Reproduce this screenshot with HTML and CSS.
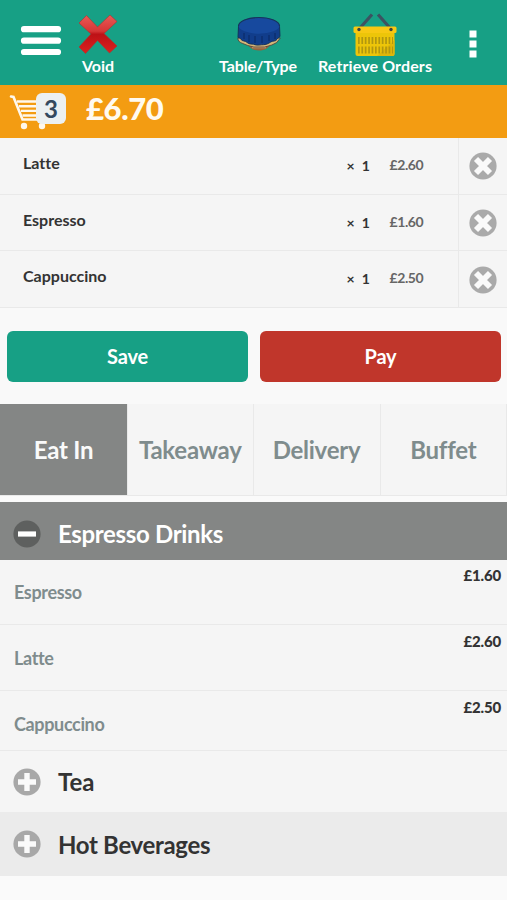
FILE: index.html
```html
<!DOCTYPE html>
<html lang="en">
<head>
<meta charset="utf-8">
<title>Point of Sale</title>
<link rel="stylesheet" href="styles.css">
</head>
<body>
<svg width="0" height="0" class="defs" aria-hidden="true">
  <symbol id="remove" viewBox="0 0 28 28"><circle cx="14" cy="14" r="13.6" fill="#aaa"/><path d="M7 7 21 21M21 7 7 21" stroke="#fafafa" stroke-width="5.8"/></symbol>
  <symbol id="plus" viewBox="0 0 28 28"><circle cx="14" cy="14" r="13.6" fill="#a8a8a8"/><path d="M14 5v18M5 14h18" stroke="#fafafa" stroke-width="5.4"/></symbol>
  <symbol id="minus" viewBox="0 0 28 28"><circle cx="14" cy="14" r="13.6" fill="#5e605f"/><path d="M5 14h18" stroke="#fff" stroke-width="5.2"/></symbol>
</svg>
<header class="topbar">
  <svg class="menu" width="42" height="32" viewBox="0 0 42 32"><path d="M4 4.2h34M4 15.7h34M4 27h34" stroke="#fff" stroke-width="6.2" stroke-linecap="round"/></svg>
  <div class="action void">
    <svg width="42" height="42" viewBox="0 0 42 42">
      <defs><linearGradient id="red" x2="0" y2="1"><stop offset="0" stop-color="#e95a56"/><stop offset=".42" stop-color="#d63636"/><stop offset=".5" stop-color="#bd1116"/><stop offset="1" stop-color="#dc211e"/></linearGradient></defs>
      <path d="M9.500 2.500 20.500 14 33 2 40 8.500 27 20.500 40 33l-7.500 7L20.500 27.500 8.500 40.500 2 34 14 21 2 10z" fill="url(#red)" stroke="#b02f2c" stroke-width=".6"/>
    </svg>
    <span>Void</span>
  </div>
  <div class="action table">
    <svg width="46" height="38" viewBox="0 0 46 38">
      <path d="M12 29c1 4 5 6.500 11 6.500S33 33 34 29z" fill="#94643f"/>
      <path d="M16 32.500h14" stroke="#c79a6b" stroke-width="1.500"/>
      <path d="M1.800 23c0 3 2 4.500 5 5.500l5 2 6 1.500h11l7-2 5-2.500 3.500-4.500z" fill="#d6b777" stroke="#4b3e3a" stroke-width=".8"/>
      <path d="M2.500 11 2 22.500c3 0 3 3.500 6 3.500s3 3 7 3 4 1.500 8 1 5 0 8-1 4-3 7-3 3-3 6-4.500L43.500 11z" fill="#113d8b" stroke="#14335c"/>
      <path d="M8 18v6m5-4v7m6-6v7m7-7v7m7-8v6m6-8v6" stroke="#0c2c6a" stroke-width="1.200"/>
      <ellipse cx="23" cy="10.500" rx="20.500" ry="8.300" fill="#17499e"/>
      <path d="M2.500 11a20.500 8.500 0 0 1 41 0" fill="none" stroke="#17345a" stroke-width="1.200"/>
    </svg>
    <span>Table/Type</span>
  </div>
  <div class="action retrieve">
    <svg width="44" height="44" viewBox="0 0 44 44">
      <path d="m7 15 12-13.500M37 15 25 1.500" stroke="#3c5361" stroke-width="3.200"/>
      <path d="M2.500 18h39V41q0 2-2 2h-35q-2 0-2-2z" fill="#edc509"/>
      <path d="M24 43 41.500 27V41q0 2-2 2z" fill="#dfb608"/>
      <rect x=".5" y="13.500" width="43" height="6.500" rx="1.500" fill="#f8c813"/>
      <circle cx="6" cy="16.500" r="1.700" fill="#3d4440"/><circle cx="38" cy="16.500" r="1.700" fill="#3d4440"/>
      <path d="M5 27.500h35M5 37h35" stroke="#b2970f" stroke-width="7" stroke-dasharray="1.700 1.700"/>
    </svg>
    <span>Retrieve Orders</span>
  </div>
  <svg class="more" width="8" height="28" viewBox="0 0 8 28" fill="#fff"><path d="M.5.5h7v7h-7zM.5 10.500h7v7h-7zM.5 20.500h7v7h-7z"/></svg>
</header>
<section class="total">
  <div class="cart">
    <svg width="40" height="36" viewBox="0 0 40 36" fill="none" stroke="#fff8ec">
      <path d="M2 2.500 4.500 3 13.500 25.500H38" stroke-width="2.600" stroke-linecap="round"/>
      <path d="M8 7.500h30M10 12.200h28M12 16.900h26M13.500 21.500H38" stroke-width="2.400"/>
      <circle cx="15" cy="32" r="3.200" fill="#fff8ec" stroke="none"/><circle cx="33" cy="32" r="3.200" fill="#fff8ec" stroke="none"/>
    </svg>
    <span class="badge">3</span>
  </div>
  <strong>£6.70</strong>
</section>
<ul class="order">
  <li><span class="name">Latte</span><span class="qty"><i>×</i>1</span><span class="cost">£2.60</span><button class="del" aria-label="Remove"><svg width="28" height="28"><use href="#remove"/></svg></button></li>
  <li><span class="name">Espresso</span><span class="qty"><i>×</i>1</span><span class="cost">£1.60</span><button class="del" aria-label="Remove"><svg width="28" height="28"><use href="#remove"/></svg></button></li>
  <li><span class="name">Cappuccino</span><span class="qty"><i>×</i>1</span><span class="cost">£2.50</span><button class="del" aria-label="Remove"><svg width="28" height="28"><use href="#remove"/></svg></button></li>
</ul>
<div class="buttons"><button class="save">Save</button><button class="pay">Pay</button></div>
<nav class="tabs"><a class="active">Eat In</a><a>Takeaway</a><a>Delivery</a><a>Buffet</a></nav>
<main>
  <h2 class="open"><svg width="28" height="28"><use href="#minus"/></svg>Espresso Drinks</h2>
  <ul class="items">
    <li><span>Espresso</span><b>£1.60</b></li>
    <li><span>Latte</span><b>£2.60</b></li>
    <li><span>Cappuccino</span><b>£2.50</b></li>
  </ul>
  <h2 class="tea"><svg width="28" height="28"><use href="#plus"/></svg>Tea</h2>
  <h2 class="hot"><svg width="28" height="28"><use href="#plus"/></svg>Hot Beverages</h2>
</main>
</body>
</html>
```
FILE: styles.css
```css
* { box-sizing: border-box; }
body { margin: 0; height: 900px; overflow: hidden; background: #fafafa; font-family: Lato, sans-serif; font-weight: 700; font-variant-ligatures: none; color: #333; }
.defs { display: block; height: 0; }
svg { display: block; flex: none; }
button { border: 0; padding: 0; font: inherit; }
ul { margin: 0; padding: 0; list-style: none; }

.topbar { height: 85px; background: #17a085; display: flex; color: #fff; }
.menu { margin: 25px 0 0 20px; }
.action { display: flex; flex-direction: column; align-items: center; justify-content: flex-end; height: 76px; font-size: 16px; line-height: 20px; white-space: nowrap; }
.void { width: 42px; margin-left: 15px; }
.void svg { margin-bottom: 1px; }
.table { width: 80px; margin-left: 99px; letter-spacing: -0.15px; }
.table svg { margin: 0 0 3px 2px; }
.retrieve { width: 116px; margin-left: 19px; letter-spacing: 0.12px; }
.retrieve svg { margin-right: 1px; margin-bottom: -1px; }
.more { margin: 30px 0 0 36px; }

.total { height: 53px; background: #f39c12; display: flex; color: #fffaf0; }
.cart { position: relative; width: 58px; margin-left: 9px; padding-top: 9px; }
.badge { position: absolute; left: 27px; top: 8px; width: 30px; height: 31px; border-radius: 6px; background: #ecf0f1; color: #34495e; font-size: 24px; line-height: 32px; text-align: center; }
.total strong { margin-left: 19px; font-size: 31px; line-height: 46px; letter-spacing: -0.4px; }

.order { background: #f5f5f5; }
.order li { height: 56.67px; display: flex; border-bottom: 1px solid #e9e9e9; }
.name { width: 324px; padding: 15px 0 0 23px; font-size: 16px; line-height: 20px; }
.qty { width: 65.5px; display: flex; gap: 7px; padding: 18px 0 0 22.5px; font-size: 14px; line-height: 20px; }
.qty i { font-style: normal; }
.cost { width: 68.500px; padding-top: 17px; font-size: 14px; line-height: 20px; letter-spacing: -0.4px; color: #666; }
.del { flex: 1; display: flex; align-items: center; justify-content: center; padding-top: 1px; border-left: 1px solid #e9e9e9; background: none; }

.buttons { display: grid; grid-template-columns: 1fr 1fr; gap: 12px; height: 96px; padding: 23px 6px 22px 7px; background: #f9f9f9; }
.buttons button { border-radius: 6px; color: #fff; font-size: 20px; letter-spacing: -0.2px; }
.save { background: #17a085; }
.pay { background: #c0362b; }

.tabs { display: grid; grid-template-columns: 128px 125.5px 127px 1fr; height: 92px; background: #f5f5f5; border-bottom: 1px solid #e9e9e9; color: #7f8c8d; }
.tabs a { display: flex; align-items: center; justify-content: center; border-right: 1px solid #e9e9e9; font-size: 24px; letter-spacing: -0.25px; }
.tabs .active { background: #848685; color: #fafafa; }

main { margin-top: 6px; }
h2 { margin: 0; display: flex; align-items: center; gap: 17px; padding-left: 13px; font-size: 24px; letter-spacing: -0.33px; }
.open { height: 58px; padding-top: 6px; background: #848685; color: #fff; }
.items { background: #f5f5f5; }
.items li { height: 66px; display: flex; justify-content: space-between; padding: 0 6px 0 14px; border-bottom: 1px solid #e9e9e9; }
.items li:first-child { height: 65px; }
.items li:last-child { height: 60px; }
.items span { padding-top: 22px; font-size: 18px; line-height: 22px; letter-spacing: -0.35px; color: #7f8c8d; }
.items li:first-child span { padding-top: 21px; }
.items b { padding-top: 6px; font-size: 15px; line-height: 20px; letter-spacing: -0.15px; }
.items li:first-child b { padding-top: 5px; }
.tea { height: 61px; padding-top: 1px; background: #f5f5f5; letter-spacing: 0; }
.hot { height: 64px; padding-top: 1px; background: #ebebeb; }
```
